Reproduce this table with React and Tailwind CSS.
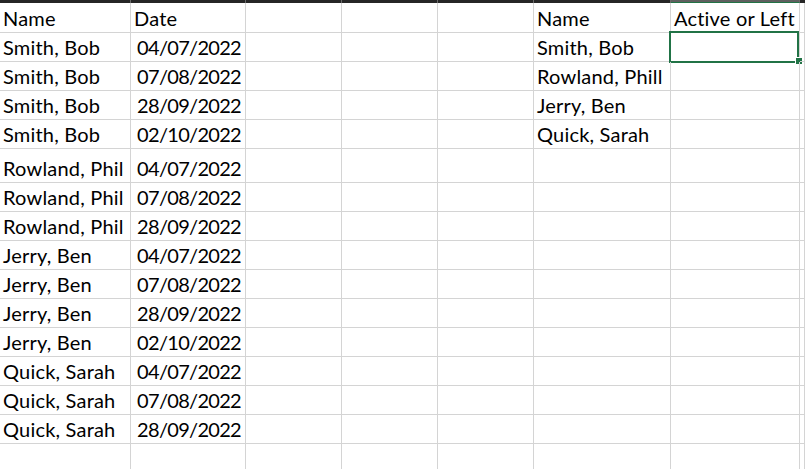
import React from "react";

const widths = ["w-[131px]", "w-[115px]", "w-[96px]", "w-[96px]", "w-[96px]", "w-[137px]", "w-[129px]", "flex-1"];

const names = [
  "Smith, Bob", "Smith, Bob", "Smith, Bob", "Smith, Bob",
  "Rowland, Phil", "Rowland, Phil", "Rowland, Phil",
  "Jerry, Ben", "Jerry, Ben", "Jerry, Ben", "Jerry, Ben",
  "Quick, Sarah", "Quick, Sarah", "Quick, Sarah",
];
const dates = [
  "04/07/2022", "07/08/2022", "28/09/2022", "02/10/2022",
  "04/07/2022", "07/08/2022", "28/09/2022",
  "04/07/2022", "07/08/2022", "28/09/2022", "02/10/2022",
  "04/07/2022", "07/08/2022", "28/09/2022",
];
const lookup = ["Smith, Bob", "Rowland, Phill", "Jerry, Ben", "Quick, Sarah"];

// each row: [A, B, F, G]
const rows = [
  { h: "h-[30px]", cells: ["Name", "Date", "Name", "Active or Left"] },
  ...names.map((n, i) => ({
    h: i === 4 ? "h-[34px]" : "h-[29px]",
    cells: [n, dates[i], lookup[i] || "", ""],
  })),
  { h: "h-[29px]", cells: ["", "", "", ""] },
];

const Cell = ({ w, h, right, children, selected }) => (
  <div
    className={`${w} ${h} relative shrink-0 border-r border-b border-[#d4d4d4] flex items-end overflow-visible whitespace-nowrap ${
      right ? "justify-end pr-[4px] tracking-[-0.7px]" : "pl-[3px] tracking-[0.2px]"
    }`}
  >
    <span className="leading-[20px] pb-[4px]">{children}</span>
    {selected && (
      <>
        <div className="absolute -left-[2px] -top-[2px] w-[130px] h-[32px] border-2 border-[#217346]" />
        <div className="absolute -right-[4px] -bottom-[4px] w-[8px] h-[8px] bg-[#217346] border border-white" />
      </>
    )}
  </div>
);

export default function App() {
  return (
    <div
      className="w-[805px] h-[469px] overflow-hidden bg-white text-black text-[20px]"
      style={{ fontFamily: "Lato, 'Open Sans', sans-serif" }}
    >
      <div className="flex h-[3px] bg-[#262626]">
        {widths.map((w, i) => (
          <div
            key={i}
            className={`${w} shrink-0 h-[3px] ${i === 7 ? "" : "border-r border-[#6a6a6a]"} ${
              i === 6 ? "bg-[#5f5f5f] border-b border-b-[#217346]" : ""
            }`}
          />
        ))}
      </div>
      {rows.map((r, ri) => (
        <div key={ri} className="flex">
          <Cell w={widths[0]} h={r.h}>{r.cells[0]}</Cell>
          <Cell w={widths[1]} h={r.h} right={ri > 0}>{r.cells[1]}</Cell>
          <Cell w={widths[2]} h={r.h} />
          <Cell w={widths[3]} h={r.h} />
          <Cell w={widths[4]} h={r.h} />
          <Cell w={widths[5]} h={r.h}>{r.cells[2]}</Cell>
          <Cell w={widths[6]} h={r.h} selected={ri === 1}>{r.cells[3]}</Cell>
          <Cell w={widths[7]} h={r.h} />
        </div>
      ))}
    </div>
  );
}
